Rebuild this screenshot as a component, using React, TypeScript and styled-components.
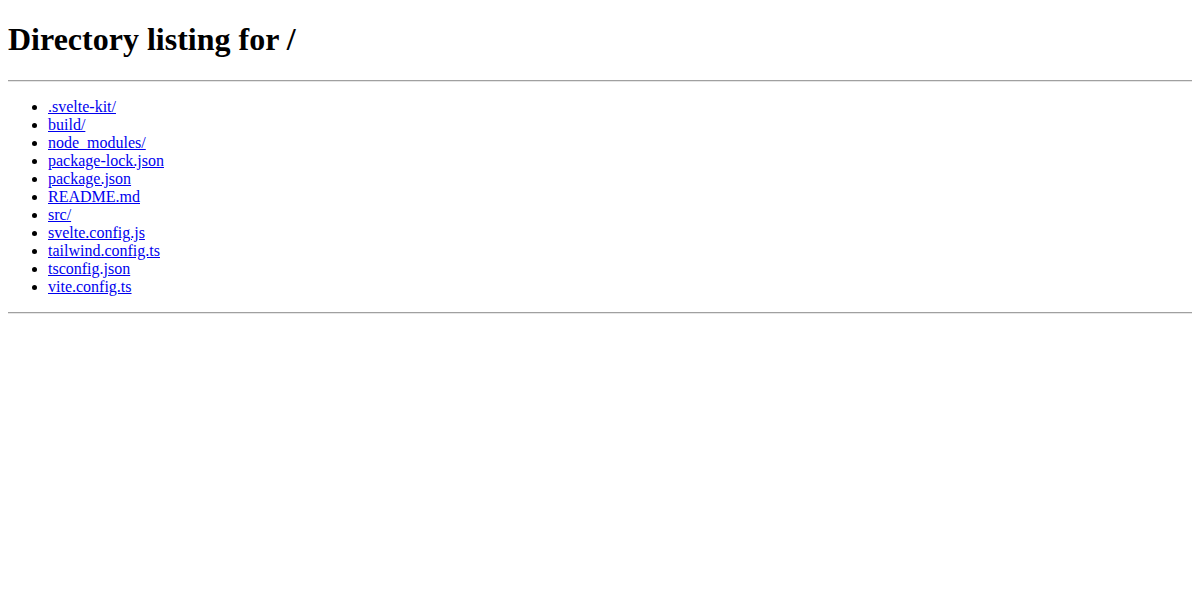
import React from "react";
import styled, { createGlobalStyle } from "styled-components";

const GlobalStyle = createGlobalStyle`
  html, body {
    background: #fff;
  }
  body {
    margin: 0 8px 8px;
    font-family: "Liberation Serif", "Times New Roman", serif;
    font-size: 16px;
    color: #000;
  }
`;

const Title = styled.h1`
  font-size: 32px;
  font-weight: bold;
  margin: 21.44px 0;
`;

const Rule = styled.hr`
  margin: 8px 0;
  border: none;
  border-top: 1px solid #a0a0a0;
  border-bottom: 1px solid #e6e6e6;
  height: 0;
`;

const List = styled.ul`
  margin: 16px 0;
  padding-left: 40px;
  list-style: disc;
`;

const Item = styled.li`
  line-height: normal;
`;

const FileLink = styled.a`
  color: #0000ee;
  text-decoration: underline;
`;

const files = [
  ".svelte-kit/",
  "build/",
  "node_modules/",
  "package-lock.json",
  "package.json",
  "README.md",
  "src/",
  "svelte.config.js",
  "tailwind.config.ts",
  "tsconfig.json",
  "vite.config.ts",
];

const App = () => {
  return (
    <>
      <GlobalStyle />
      <Title>Directory listing for /</Title>
      <Rule />
      <List>
        {files.map((name) => (
          <Item key={name}>
            <FileLink href={name}>{name}</FileLink>
          </Item>
        ))}
      </List>
      <Rule />
    </>
  );
};

export default App;
